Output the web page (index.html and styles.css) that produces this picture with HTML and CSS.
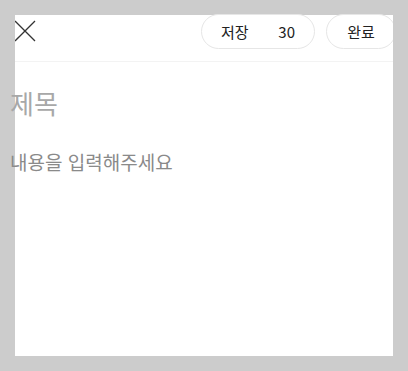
FILE: index.html
```html
<!DOCTYPE html>
<html lang="ko">
  <head>
    <meta charset="UTF-8" />
    <meta name="viewport" content="width=device-width, initial-scale=1.0" />
    <title>글쓰기</title>
    <link rel="stylesheet" href="styles.css">
  </head>
  <body>
    <div class="editor">
      <div class="topbar">
        <button class="close-btn" aria-label="닫기">
          <svg width="22" height="22" viewBox="0 0 22 22">
            <path d="M1 1 L21 21 M21 1 L1 21" stroke="#333" stroke-width="1.3" fill="none" />
          </svg>
        </button>
        <div class="actions">
          <button class="pill save-btn"><span>저장</span><span>30</span></button>
          <button class="pill done-btn">완료</button>
        </div>
      </div>
      <div class="content">
        <input type="text" class="title-input" placeholder="제목" />
        <textarea class="body-input" placeholder="내용을 입력해주세요"></textarea>
      </div>
    </div>
  </body>
</html>
```

FILE: styles.css
```css
* {
  box-sizing: border-box;
}

body {
  margin: 0;
  padding: 15px;
  background: #cccccc;
  font-family: "Noto Sans CJK KR", "Noto Sans", sans-serif;
}

.editor {
  width: 378px;
  height: 341px;
  background: #fff;
}

.topbar {
  height: 47px;
  display: flex;
  justify-content: space-between;
  align-items: flex-start;
  border-bottom: 1px solid #f3f3f3;
  overflow-x: clip;
}

.close-btn {
  border: none;
  background: none;
  padding: 0;
  margin: 5px 0 0 -1px;
  width: 22px;
  height: 22px;
  display: block;
}

.close-btn svg {
  display: block;
}

.actions {
  display: flex;
  gap: 11px;
  margin-top: -1px;
  margin-right: -3px;
}

.pill {
  height: 35px;
  border: 1px solid #e6e6e6;
  border-radius: 18px;
  background: #fff;
  color: #222;
  font-family: inherit;
  font-size: 15px;
  padding: 0 19px;
  display: flex;
  align-items: center;
}

.save-btn {
  width: 114px;
  justify-content: space-between;
}

.done-btn {
  width: 70px;
  justify-content: center;
}

.content {
  margin-left: -5px;
  padding-top: 23px;
}

.title-input,
.body-input {
  display: block;
  width: 100%;
  border: none;
  outline: none;
  background: transparent;
  padding: 0;
  font-family: inherit;
  resize: none;
}

.title-input {
  font-size: 26px;
  height: 35px;
}

.title-input::placeholder {
  color: #a8a8a8;
}

.body-input {
  margin-top: 29px;
  font-size: 19px;
  line-height: 1.4;
  height: 180px;
}

.body-input::placeholder {
  color: #8a8a8a;
}
```
